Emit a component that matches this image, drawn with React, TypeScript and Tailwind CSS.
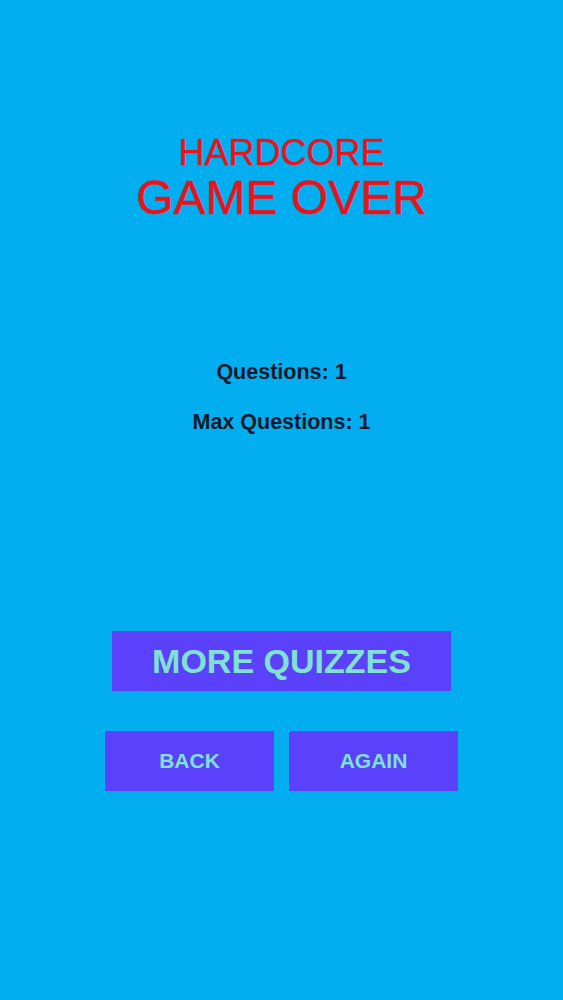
export default function App() {
  return (
    <div
      className="w-full min-h-[1000px] bg-[#02aeef] flex flex-col items-center"
      style={{ fontFamily: '"Liberation Sans", Arial, sans-serif' }}
    >
      <div className="mt-[133px] text-[36px] leading-[40px] text-[#e8141c] [-webkit-text-stroke:0.4px_#e8141c]">HARDCORE</div>
      <div className="text-[48px] leading-[50px] text-[#e8141c] [-webkit-text-stroke:0.5px_#e8141c]">GAME OVER</div>
      <div className="mt-[137px] text-[21.5px] leading-[24px] font-bold text-[#0b1a2a]">Questions: 1</div>
      <div className="mt-[26px] text-[21.5px] leading-[24px] font-bold text-[#0b1a2a]">Max Questions: 1</div>
      <button className="mt-[197px] w-[339px] h-[60px] bg-[#5b41fb] text-[#7ee3d3] text-[34px] font-bold flex items-center justify-center">
        MORE QUIZZES
      </button>
      <div className="mt-[40px] flex gap-[15px]">
        <button className="w-[169px] h-[60px] bg-[#5b41fb] text-[#7ee3d3] text-[21px] font-bold flex items-center justify-center">
          BACK
        </button>
        <button className="w-[169px] h-[60px] bg-[#5b41fb] text-[#7ee3d3] text-[21px] font-bold flex items-center justify-center">
          AGAIN
        </button>
      </div>
    </div>
  );
}
